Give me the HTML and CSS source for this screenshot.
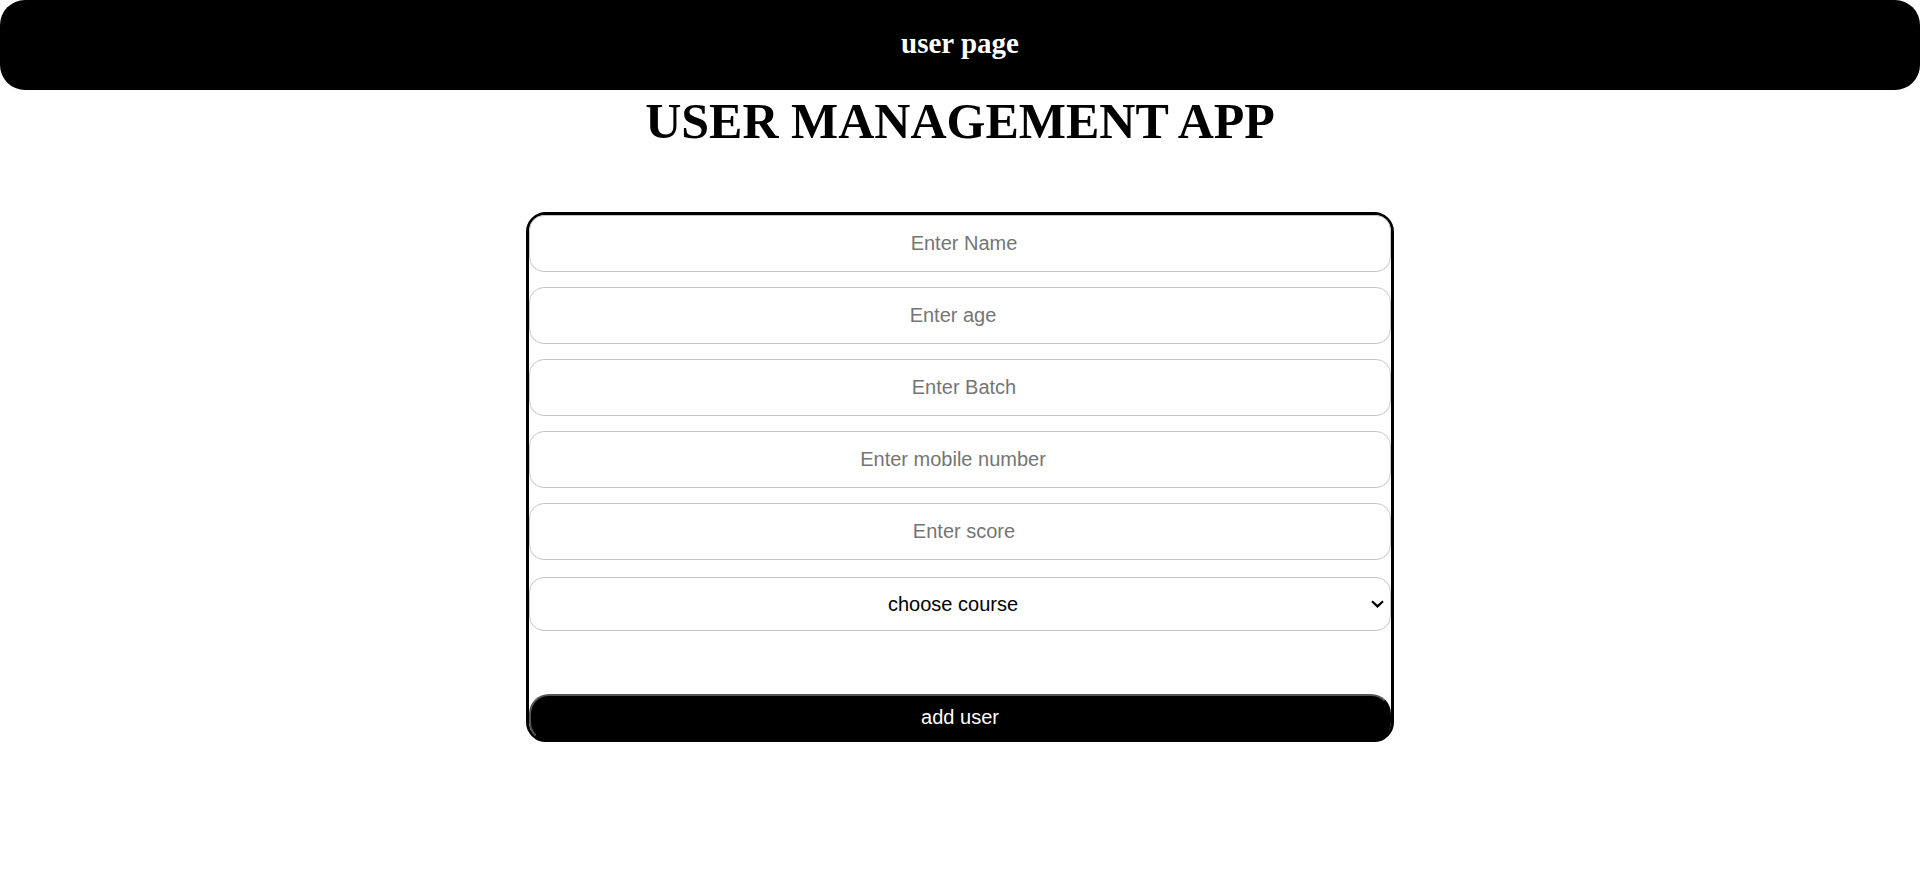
FILE: index.html
```html
<!DOCTYPE html>
<html lang="en">
<head>
<meta charset="utf-8">
<title>User Management App</title>
<link rel="stylesheet" href="styles.css">
</head>
<body>
  <header class="topbar">
    <h2 class="topbar-title">user page</h2>
  </header>
  <h1 class="app-title">USER MANAGEMENT APP</h1>
  <form class="user-form">
    <input class="field" type="text" placeholder="Enter Name">
    <input class="field field-number" type="number" placeholder="Enter age">
    <input class="field" type="text" placeholder="Enter Batch">
    <input class="field field-number" type="number" placeholder="Enter mobile number">
    <input class="field" type="text" placeholder="Enter score">
    <select class="field select-field">
      <option>choose course</option>
      <option>React</option>
      <option>Node</option>
    </select>
    <button class="add-btn" type="button">add user</button>
  </form>
</body>
</html>
```
FILE: styles.css
```css
html, body {
  margin: 0;
  padding: 0;
  background: #ffffff;
}

body {
  font-family: "Liberation Serif", "Times New Roman", serif;
}

.topbar {
  height: 90px;
  background: #000000;
  border-radius: 25px;
  display: flex;
  align-items: center;
  justify-content: center;
  padding-bottom: 4px;
  box-sizing: border-box;
}

.topbar-title {
  margin: 0;
  color: #ffffff;
  font-size: 29px;
  font-weight: bold;
}

.app-title {
  margin: 2px 0 0;
  text-align: center;
  font-size: 50px;
  font-weight: bold;
  color: #000000;
}

.user-form {
  width: 868px;
  margin: 62px auto 0;
  box-sizing: border-box;
  border: 3px solid #000000;
  border-radius: 20px;
  display: flex;
  flex-direction: column;
}

.field {
  display: block;
  width: 100%;
  height: 57px;
  box-sizing: border-box;
  margin: 0 0 15px;
  border: 1px solid #c4c4c4;
  border-radius: 15px;
  padding: 0 2px 0 10px;
  font-family: "Liberation Sans", Arial, sans-serif;
  font-size: 20px;
  text-align: center;
  color: #000000;
  background: #ffffff;
  outline: none;
}

.field-number {
  padding-right: 9px;
}

.field::placeholder {
  color: #757575;
}

.select-field {
  -webkit-appearance: none;
  appearance: none;
  height: 54px;
  margin: 2px 0 0;
  padding: 0 24px 0 10px;
  text-align-last: center;
  background-image: url("data:image/svg+xml,%3Csvg xmlns='http://www.w3.org/2000/svg' width='13' height='8' viewBox='0 0 13 8'%3E%3Cpolyline points='1,1.2 6.5,6.4 12,1.2' fill='none' stroke='%23000' stroke-width='2.2'/%3E%3C/svg%3E");
  background-repeat: no-repeat;
  background-position: right 6px center;
  background-size: 13px 8px;
}

.add-btn {
  display: block;
  width: 100%;
  height: 48px;
  margin: 63px 0 -3px;
  padding: 0 0 2px;
  box-sizing: border-box;
  background: #000000;
  color: #ffffff;
  font-family: "Liberation Sans", Arial, sans-serif;
  font-size: 20px;
  border: 2px solid #000000;
  border-top-color: #555555;
  border-left-color: #555555;
  border-radius: 20px;
  cursor: pointer;
}
```
